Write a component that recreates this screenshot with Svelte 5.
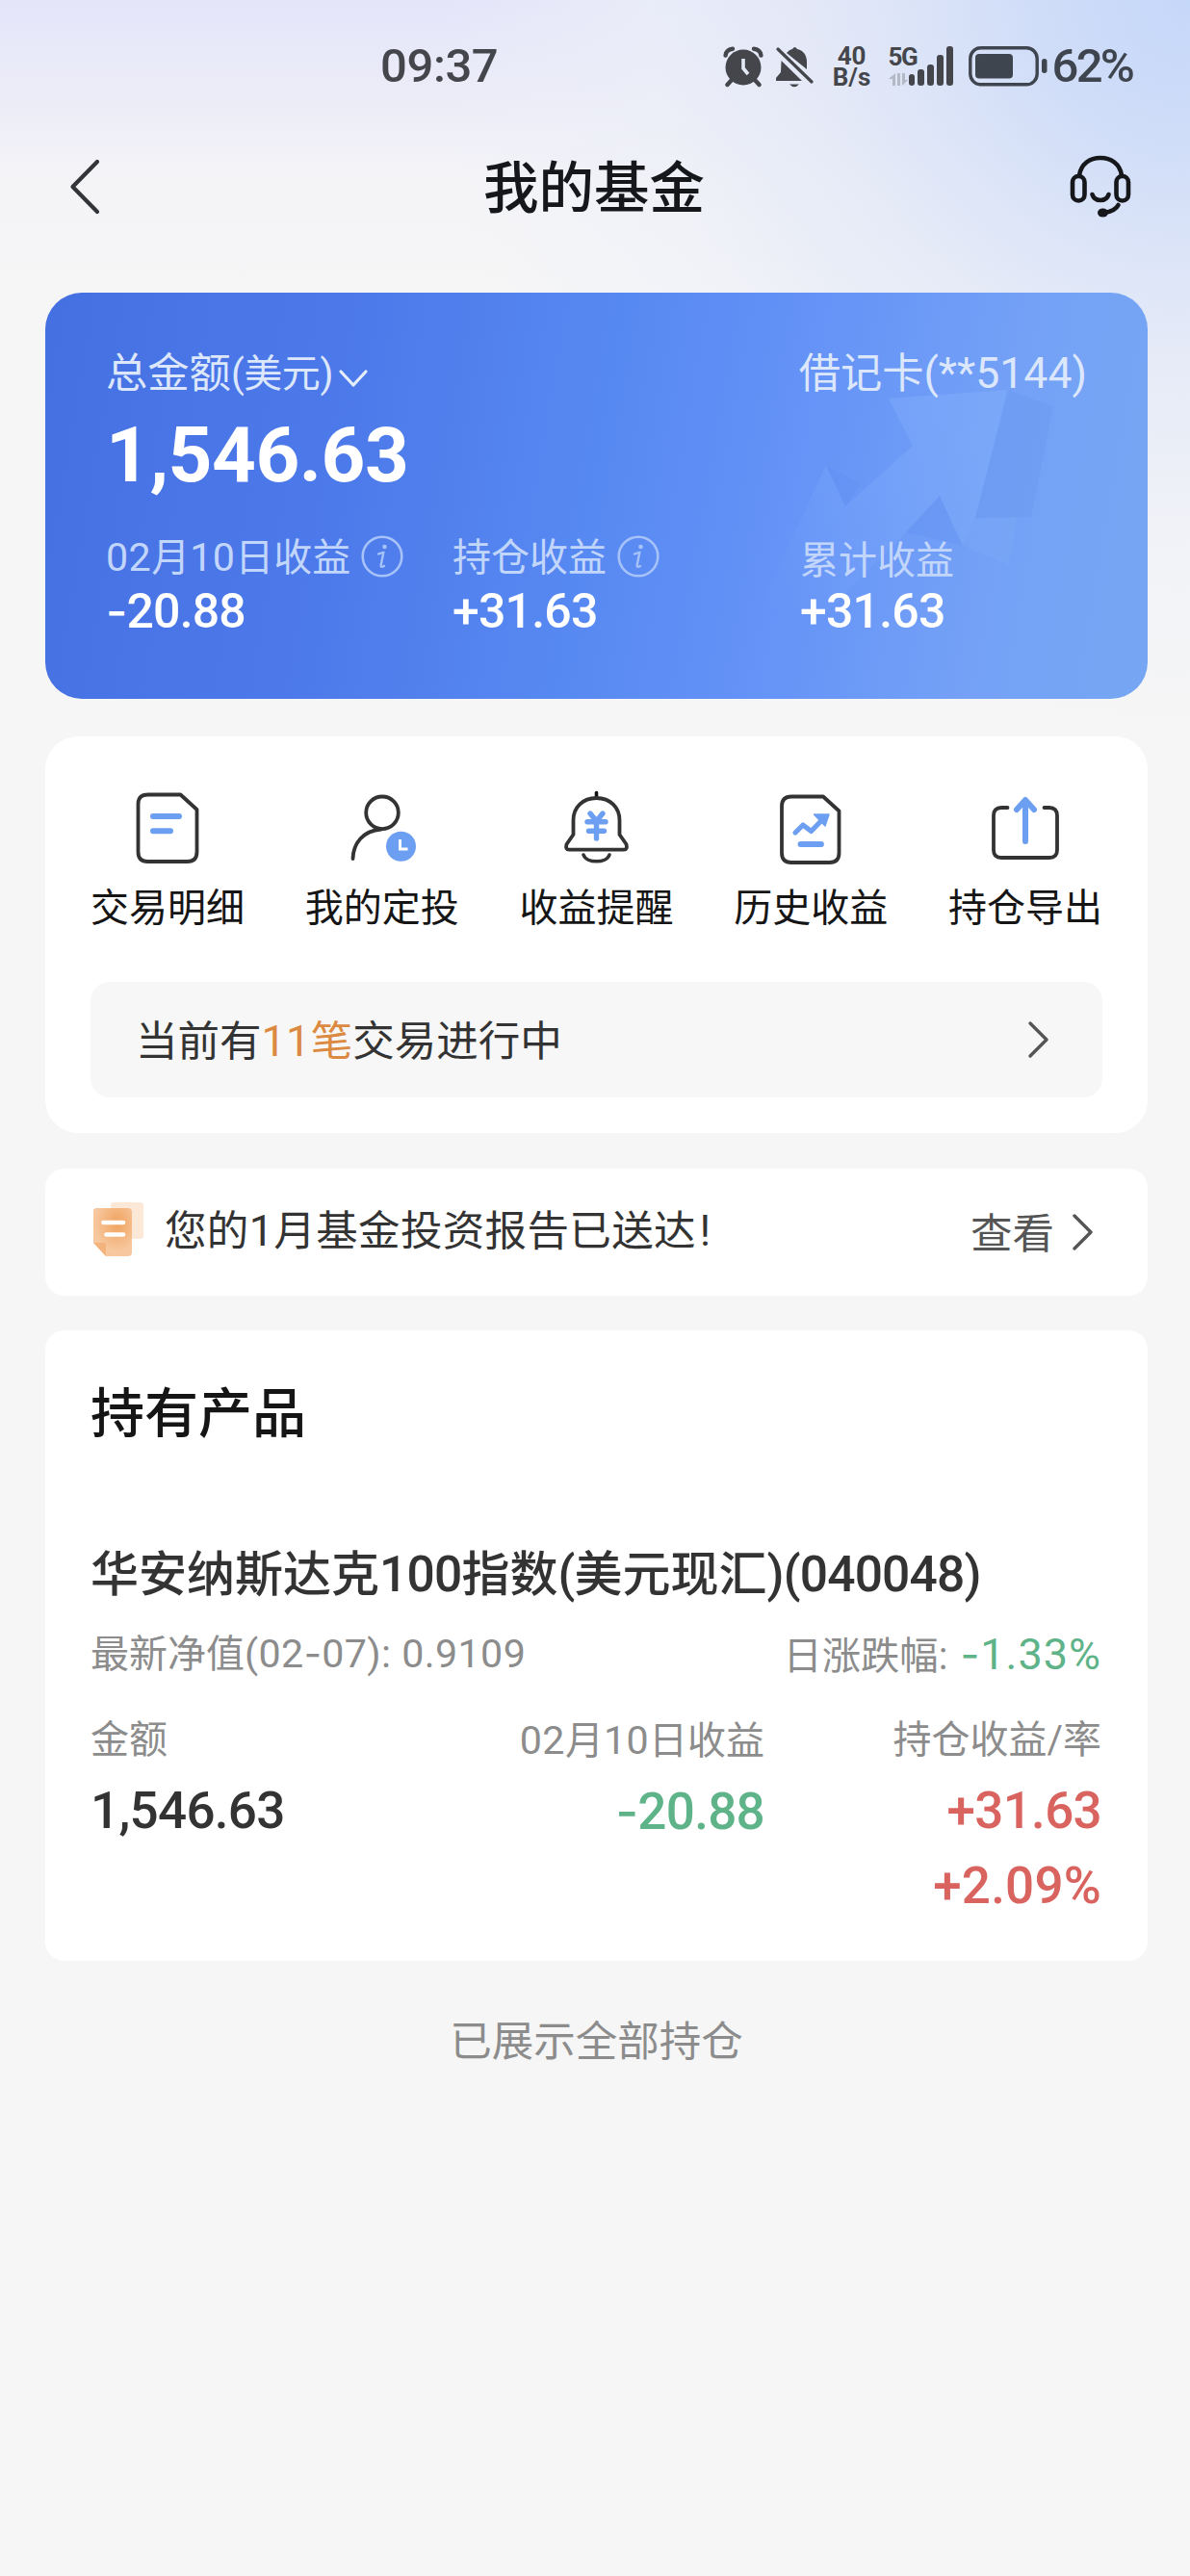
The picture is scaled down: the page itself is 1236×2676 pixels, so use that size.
<script>
  const signalBars = [12, 17, 22, 32, 41];

  const totals = [
    { label: ['02', '月', '10', '日收益'], sign: '-', value: '20.88', info: true },
    { label: ['', '持仓收益'], sign: '+', value: '31.63', info: true },
    { label: ['', '累计收益'], sign: '+', value: '31.63', info: false }
  ];

  const shortcuts = [
    { icon: 'list', label: '交易明细' },
    { icon: 'person', label: '我的定投' },
    { icon: 'bell', label: '收益提醒' },
    { icon: 'chart', label: '历史收益' },
    { icon: 'export', label: '持仓导出' }
  ];
</script>

<div class="page">
  <header class="status">
    <span class="time">09:37</span>
    <div class="indicators">
      <svg class="alarm" viewBox="0 0 42 44" width="42" height="44">
        <g fill="none" stroke="#44464c" stroke-width="4.4" stroke-linecap="round">
          <path d="M2.6 10.5C3 6.500 6 4 10 3.700M39.400 10.500C39 6.500 36 4 32 3.700" />
          <path d="M9 36L4.500 41M33 36L37.500 41" />
        </g>
        <circle cx="21" cy="23" r="18.500" fill="#44464c" />
        <path d="M21 14V24L26 30" fill="none" stroke="#e4e9f6" stroke-width="3.600" />
      </svg>
      <svg class="mute" viewBox="0 0 40 44" width="40" height="44">
        <path d="M12 8C14 5.500 16 4.500 18 4Q20.500 0 23 4C30 5.500 33 11 33 17V25Z" fill="#44464c" />
        <path d="M6.500 16L28 37H1V34L6 28Z" fill="#44464c" />
        <path d="M15 40.500H25Q20 46 15 40.500Z" fill="#44464c" />
        <path d="M3 4L38 38" stroke="#44464c" stroke-width="3.200" stroke-linecap="round" />
      </svg>
      <span class="speed"><b>40</b><b>B/s</b></span>
      <div class="signal">
        <div class="network">
          <b>5G</b>
          <svg viewBox="0 0 20 13" width="20" height="13">
            <path d="M0 6L7 0V13H4V6ZM9 0H12V13H9ZM14 0V13L20 7H17V0Z" fill="#b4b9c6" />
          </svg>
        </div>
        <div class="bars">
          {#each signalBars as height}
            <i style="height: {height}px"></i>
          {/each}
        </div>
      </div>
      <svg class="battery" viewBox="0 0 82 42" width="82" height="42">
        <rect x="1.800" y="1.800" width="69.400" height="38" rx="11" fill="none" stroke="#3f454f" stroke-width="3.400" />
        <rect x="7" y="8" width="39" height="25.500" rx="4" fill="#3f454f" />
        <rect x="76" y="13" width="5.500" height="15" rx="2.700" fill="#3f454f" />
      </svg>
      <span class="percent">62%</span>
    </div>
  </header>

  <nav class="nav">
    <svg viewBox="0 0 34 60" width="34" height="60">
      <path d="M30 4L4.500 30L30 56" fill="none" stroke="#333438" stroke-width="4.200" stroke-linecap="round" stroke-linejoin="round" />
    </svg>
    <h1>我的基金</h1>
    <svg viewBox="0 0 64 66" width="64" height="66">
      <g fill="none" stroke="#15171b" stroke-width="4.600" stroke-linecap="round">
        <path d="M10 21C12 9 21 3 32 3S52 9 54 21" />
        <rect x="3" y="22" width="12.500" height="25.500" rx="6.200" />
        <rect x="48.500" y="22" width="12.500" height="25.500" rx="6.200" />
        <path d="M23.500 41C26 49 38 49 40.500 41" />
        <path d="M50.500 52C48 57 43 59 36 60" />
      </g>
      <ellipse cx="34.500" cy="60" rx="5.500" ry="4.600" fill="#15171b" />
    </svg>
  </nav>

  <main>
    <section class="summary">
      <svg class="trend" viewBox="0 0 330 260" width="330" height="260">
        <defs>
          <linearGradient id="arrow" x1="1" y1="0" x2="0" y2="1">
            <stop offset="0.200" stop-color="#8db7ff" stop-opacity="0.320" />
            <stop offset="1" stop-color="#8db7ff" stop-opacity="0" />
          </linearGradient>
        </defs>
        <path d="M153 24L276 15L243 148L230 177L206 125L171 163L90 245L20 240L88 93L108 136L178 73Z" fill="url(#arrow)" />
        <path d="M278 15L324 33L301 147L243 148Z" fill="#6293ec" fill-opacity="0.240" />
        <path d="M88 93L124 113L108 136Z" fill="#5c8cf0" fill-opacity="0.280" />
        <path d="M206 125L230 177L171 163Z" fill="#5c8cf0" fill-opacity="0.260" />
        <path d="M243 148L286 147L278 197L230 177Z" fill="#8ab2fb" fill-opacity="0.160" />
      </svg>
      <div class="heading">
        <span class="total">总金额<small>(美元)</small>
          <svg viewBox="0 0 32 20" width="32" height="20">
            <path d="M3 3L16 17L29 3" fill="none" stroke="#e6eefc" stroke-width="3.200" stroke-linecap="round" stroke-linejoin="round" />
          </svg>
        </span>
        <span class="card-no">借记卡<span class="n">(**5144)</span></span>
      </div>
      <strong class="amount">1,546.63</strong>
      <div class="totals">
        {#each totals as item}
          <div>
            <div class="label" class:plain={!item.info}>
              <span>{#each item.label as part, i}{#if i % 2 === 0}<span class="n">{part}</span>{:else}{part}{/if}{/each}</span>
              {#if item.info}
                <svg viewBox="0 0 44 44" width="44" height="44">
                  <circle cx="22" cy="22" r="20.300" fill="none" stroke="#a6c2f8" stroke-width="2.600" />
                  <circle cx="24.500" cy="12" r="2.300" fill="#a6c2f8" />
                  <path d="M18 19.500Q22 18 23.300 18L20.600 31.500Q20.500 34 24 32" fill="none" stroke="#a6c2f8" stroke-width="2.400" stroke-linecap="round" />
                </svg>
              {/if}
            </div>
            <div class="value"><span class:dash={item.sign === '-'}>{item.sign}</span>{item.value}</div>
          </div>
        {/each}
      </div>
    </section>

    <section class="tools">
      <div class="shortcuts">
        {#each shortcuts as item}
          <div class="shortcut">
            <svg viewBox="0 0 80 80" width="80" height="80" fill="none" stroke-linecap="round" stroke-linejoin="round">
              {#if item.icon === 'list'}
                <path d="M19 5.500H53.500L70.500 21V65Q70.500 75 60.500 75H19.500Q9.500 75 9.500 65V15.500Q9.500 5.500 19.500 5.500Z" stroke="#333" stroke-width="3.800" />
                <path d="M25 28H52M25 43.300H43" stroke="#6c9ff1" stroke-width="6" />
              {:else if item.icon === 'person'}
                <circle cx="40" cy="24.300" r="16.800" stroke="#333" stroke-width="3.800" />
                <path d="M39 41.500C20 43 10 56 9.500 72" stroke="#333" stroke-width="3.800" />
                <circle cx="59.500" cy="59.300" r="15.500" fill="#6c9ff1" />
                <path d="M58.500 52V62H66.500" stroke="#fff" stroke-width="3" stroke-linecap="butt" stroke-linejoin="miter" />
              {:else if item.icon === 'bell'}
                <path d="M39.500 3.500V9" stroke="#111" stroke-width="3.600" />
                <path d="M39.500 9C25 9 15.500 19 15.500 32V47L8.500 57Q7 62.700 11 62.700H68Q72 62.700 70.500 57L63.500 47V32C63.500 19 54 9 39.500 9Z" stroke="#333" stroke-width="3.800" />
                <path d="M26 68C29 77 50 77 53 68" stroke="#333" stroke-width="3.600" />
                <path d="M33 25L39.500 33L46 25M30 33.700H49M31.500 43.300H47.500M39.500 34V51" stroke="#6c9ff1" stroke-width="5.400" />
              {:else if item.icon === 'chart'}
                <path d="M20 7.500H53L69.500 22.500V66Q69.500 76 59.500 76H20Q10 76 10 66V17.500Q10 7.500 20 7.500Z" stroke="#333" stroke-width="3.800" />
                <path d="M24 45L32 37L40.500 43.500L53.500 30" stroke="#6c9ff1" stroke-width="5.200" />
                <path d="M43.500 26H59L55 38Z" fill="#6c9ff1" stroke="#6c9ff1" stroke-width="1.500" />
                <path d="M29.500 57H51" stroke="#6c9ff1" stroke-width="5.800" />
              {:else}
                <path d="M21.500 19H15Q7 19 7 27V63Q7 71 15 71H65Q73 71 73 63V27Q73 19 65 19H59.500" stroke="#333" stroke-width="3.800" />
                <path d="M40 54V12M31 21L40 11L49 21" stroke="#6c9ff1" stroke-width="6" />
              {/if}
            </svg>
            <span>{item.label}</span>
          </div>
        {/each}
      </div>
      <div class="pending">
        <span>当前有<em><span class="n">11</span>笔</em>交易进行中</span>
        <svg viewBox="0 0 24 40" width="24" height="40">
          <path d="M3 3L20 20L3 37" fill="none" stroke="#555" stroke-width="3.400" stroke-linecap="round" stroke-linejoin="round" />
        </svg>
      </div>
    </section>

    <section class="report">
      <svg viewBox="0 0 56 60" width="56" height="60">
        <defs>
          <radialGradient id="sheet" cx="0.620" cy="0.320" r="0.600">
            <stop offset="0" stop-color="#f0a35e" />
            <stop offset="1" stop-color="#f7c8a0" />
          </radialGradient>
        </defs>
        <rect x="20" y="2" width="34" height="38" rx="3" fill="#fce8d6" />
        <path d="M5 8H38Q42 8 42 12V54Q42 58 38 58H15L2 44V11Q2 8 5 8Z" fill="url(#sheet)" />
        <path d="M2 44H12Q15 44 15 47V58Z" fill="#f4b27c" />
        <path d="M12.500 23H33M15.500 35.500H33" stroke="#fff" stroke-width="4.600" stroke-linecap="round" />
      </svg>
      <span class="message">您的<span class="n">1</span>月基金投资报告已送达<span class="bang">!</span></span>
      <span class="view">查看</span>
      <svg viewBox="0 0 24 40" width="24" height="40">
        <path d="M3 3L20 20L3 37" fill="none" stroke="#555" stroke-width="3.400" stroke-linecap="round" stroke-linejoin="round" />
      </svg>
    </section>

    <section class="holdings">
      <h2>持有产品</h2>
      <h3>华安纳斯达克<span class="n">100</span>指数<span class="n">(</span>美元现汇<span class="n">)(040048)</span></h3>
      <div class="meta">
        <span>最新净值<span class="n">(02<span class="dash">-</span>07): 0.9109</span></span>
        <span class="change">日涨跌幅: <b class="down"><span class="dash">-</span>1.33%</b></span>
      </div>
      <div class="figures">
        <div>
          <div class="caption">金额</div>
          <div class="figure">1,546.63</div>
        </div>
        <div>
          <div class="caption"><span class="n">02</span>月<span class="n">10</span>日收益</div>
          <div class="figure down"><span class="dash">-</span>20.88</div>
        </div>
        <div>
          <div class="caption">持仓收益/率</div>
          <div class="figure up">+31.63</div>
          <div class="figure up rate">+2.09%</div>
        </div>
      </div>
    </section>

    <p class="end">已展示全部持仓</p>
  </main>
</div>

<style>
  :global(body) {
    margin: 0;
    background: #f6f6f6;
  }

  .page {
    box-sizing: border-box;
    width: 1236px;
    height: 2676px;
    overflow: hidden;
    font-family: Roboto, 'Noto Sans CJK SC', sans-serif;
    font-size: 40px;
    color: #333;
    white-space: nowrap;
    background:
      radial-gradient(ellipse 780px 760px at 1236px 0, #c5d7f9 0, rgba(208, 221, 248, 0.95) 22%, rgba(226, 232, 247, 0.85) 48%, rgba(236, 239, 248, 0.6) 72%, rgba(246, 246, 246, 0) 100%),
      linear-gradient(180deg, #e4e5f9 0, #ececf8 100px, #f4f4f7 190px, #f6f6f7 300px, #f6f6f6 500px);
  }

  svg {
    display: block;
    flex: none;
  }

  h1, h2, h3, p {
    margin: 0;
  }

  .n {
    font-size: 1.03em;
    letter-spacing: 0.01em;
  }

  /* Inter's hyphen is wider than Roboto's */
  .dash {
    font-family: Inter, sans-serif;
    font-size: 0.96em;
  }

  .status {
    display: flex;
    align-items: center;
    justify-content: space-between;
    height: 137px;
    padding: 0 60px 0 395px;
    color: #44464c;
  }

  .time, .percent {
    font-size: 49px;
    font-weight: 500;
    line-height: 60px;
  }

  .time {
    letter-spacing: -0.400px;
  }

  .percent {
    margin-left: 5px;
    color: #3f454f;
    letter-spacing: -2.800px;
  }

  .indicators {
    display: flex;
    align-items: center;
  }

  .mute {
    margin: 0 2px 0 12px;
  }

  .speed {
    display: flex;
    flex-direction: column;
    align-items: center;
    width: 44px;
    margin-left: 16px;
  }

  .speed b, .network b {
    font-size: 26px;
    line-height: 22px;
    letter-spacing: 0;
  }

  .signal {
    display: flex;
    align-items: flex-end;
    height: 41px;
    margin-left: 16px;
  }

  .network {
    display: flex;
    flex-direction: column;
    gap: 6px;
    width: 21px;
  }

  .network b {
    letter-spacing: -1.500px;
  }

  .bars {
    display: flex;
    align-items: flex-end;
    gap: 3.4px;
  }

  .bars i {
    width: 6.500px;
    border-radius: 3px;
    background: #44464c;
  }

  .battery {
    margin-left: 16px;
  }

  .nav {
    display: flex;
    align-items: center;
    justify-content: space-between;
    height: 114px;
    padding: 0 61px 0 71px;
  }

  h1 {
    padding: 5px 0 0 18px;
    font-size: 57.500px;
    font-weight: 500;
    line-height: 80px;
    color: #15171b;
  }

  main {
    padding: 53px 44px 0 47px;
  }

  section {
    box-sizing: border-box;
    background: #fff;
  }

  .summary {
    position: relative;
    height: 422px;
    padding: 58px 63px 0;
    border-radius: 38px;
    color: #fff;
    background: linear-gradient(100deg, #4570e2 0%, #4d7aea 28%, #5789f2 50%, #6694f7 68%, #74a1f6 84%, #76a6f3 100%);
  }

  .trend {
    position: absolute;
    left: 723px;
    top: 86px;
  }

  .heading {
    position: relative;
    display: flex;
    justify-content: space-between;
    font-size: 43.300px;
    line-height: 52px;
    color: #dce7fc;
  }

  .total {
    display: flex;
    align-items: center;
  }

  .total small {
    font-size: 40px;
    letter-spacing: -0.400px;
  }

  .total svg {
    margin: 8px 0 0 5px;
  }

  .card-no .n {
    letter-spacing: 0;
  }

  .amount {
    display: block;
    margin-top: 18px;
    font-size: 80px;
    line-height: 80px;
    letter-spacing: -0.500px;
  }

  .totals {
    position: relative;
    display: grid;
    grid-template-columns: 360px 361px 1fr;
    margin-top: 42px;
  }

  .label {
    display: flex;
    align-items: center;
    gap: 11px;
    height: 48px;
    color: #c2d6fb;
  }

  .label > span {
    margin-top: -7px;
  }

  .label > svg {
    margin-top: -3px;
  }

  .plain {
    padding-top: 3px;
    margin-bottom: -3px;
  }

  .value {
    margin-top: 4px;
    font-size: 50px;
    font-weight: 500;
    line-height: 56px;
    letter-spacing: -0.800px;
  }

  .tools {
    height: 412px;
    margin-top: 39px;
    padding: 55px 47px 0;
    border-radius: 34px;
  }

  .shortcuts {
    display: flex;
    justify-content: space-between;
    color: #151515;
  }

  .shortcut {
    display: flex;
    flex-direction: column;
    align-items: center;
    gap: 20px;
    line-height: 48px;
  }

  .pending {
    display: flex;
    align-items: center;
    justify-content: space-between;
    height: 120px;
    margin-top: 52px;
    padding: 0 54px 0 47px;
    border-radius: 20px;
    background: #f7f7f7;
    font-size: 43.500px;
  }

  .pending > span {
    padding-bottom: 3px;
  }

  .pending em {
    font-style: normal;
    color: #dc8a41;
  }

  .report {
    display: flex;
    align-items: center;
    height: 132px;
    margin-top: 37px;
    padding: 0 55px 0 48px;
    border-radius: 20px;
    font-size: 43.500px;
  }

  .report > svg:first-child {
    margin-top: -6px;
  }

  .message {
    margin: -9px 0 0 20px;
    letter-spacing: 0.350px;
  }

  .bang {
    margin-left: 4px;
  }

  .view {
    margin: -3px 18px 0 auto;
    color: #555;
  }

  .holdings {
    height: 655px;
    margin-top: 36px;
    padding: 52px 48px 0 47px;
    border-radius: 20px;
  }

  h2 {
    font-size: 56px;
    font-weight: 500;
    line-height: 70px;
    color: #151515;
  }

  h3 {
    margin-top: 102px;
    font-size: 50px;
    font-weight: 500;
    line-height: 60px;
  }

  h3 .n {
    letter-spacing: -0.800px;
  }

  .meta {
    display: flex;
    justify-content: space-between;
    margin-top: 27px;
    line-height: 50px;
    color: #8c8c8c;
  }

  .change {
    font-size: 40.300px;
  }

  .meta b {
    margin-left: 3px;
    font-size: 45px;
    font-weight: 400;
    letter-spacing: 1px;
  }

  .figures {
    display: grid;
    grid-template-columns: repeat(3, 1fr);
    margin-top: 38px;
    text-align: right;
  }

  .figures > :first-child {
    text-align: left;
  }

  .caption {
    line-height: 48px;
    color: #8c8c8c;
  }

  .figure {
    margin-top: 19px;
    font-size: 53px;
    font-weight: 500;
    line-height: 60px;
    letter-spacing: -0.700px;
  }

  .figure + .figure {
    margin-top: 18px;
  }

  .rate {
    letter-spacing: 0.200px;
  }

  .down {
    color: #5fb389;
  }

  .up {
    color: #d9635f;
  }

  .end {
    margin-top: 57px;
    font-size: 43.500px;
    line-height: 56px;
    text-align: center;
    color: #8c8c8c;
  }
</style>
